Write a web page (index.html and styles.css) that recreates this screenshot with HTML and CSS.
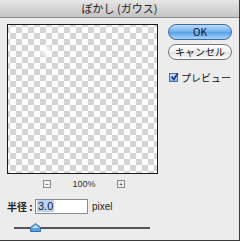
FILE: index.html
```html
<!DOCTYPE html>
<html lang="ja">
<head>
    <meta charset="UTF-8">
    <title>ぼかし (ガウス)</title>
    <link rel="stylesheet" href="styles.css">
</head>
<body>
    <div class="dialog">
        <div class="titlebar">ぼかし (ガウス)</div>
        <div class="content">
            <div class="left">
                <div class="preview"></div>
                <div class="zoombar">
                    <span class="zoombtn">&minus;</span>
                    <span class="zoomval">100%</span>
                    <span class="zoombtn">+</span>
                </div>
                <div class="radius">
                    <span class="label">半径 :</span>
                    <span class="field"><span class="sel">3.0</span></span>
                    <span class="unit">pixel</span>
                </div>
                <div class="slider">
                    <div class="track"></div>
                    <svg class="thumb" width="11" height="9" viewBox="0 0 11 9">
                        <path d="M5.5 0.5 L10.5 4.5 L10.5 8.5 L0.5 8.5 L0.5 4.5 Z" fill="#5b9fe6" stroke="#3a6ea8" stroke-width="1"/>
                        <path d="M2 5 L5.5 2 L9 5 Z" fill="#cfe4fb"/>
                    </svg>
                </div>
            </div>
            <div class="right">
                <div class="btn ok">OK</div>
                <div class="btn cancel">キャンセル</div>
                <label class="check">
                    <span class="box">
                        <svg width="9" height="9" viewBox="0 0 9 9"><path d="M1.5 4.5 L3.8 7.2 L7.8 1.2" fill="none" stroke="#1c3f8a" stroke-width="1.8"/></svg>
                    </span>
                    プレビュー
                </label>
            </div>
        </div>
    </div>
</body>
</html>
```

FILE: styles.css
```css
body {
    margin: 0;
    font-family: "Noto Sans CJK JP", "Liberation Sans", sans-serif;
    background: #ececec;
}
.dialog {
    width: 239px;
    height: 240px;
    background: #ececec;
    border-right: 1px solid #3a3a3a;
    border-bottom: 1px solid #3a3a3a;
    overflow: hidden;
}
.titlebar {
    height: 17px;
    line-height: 17px;
    text-align: center;
    font-size: 11px;
    color: #222;
    background: linear-gradient(#e6e6e6, #c4c4c4);
    border-bottom: 1px solid #8f8f8f;
}
.content {
    display: flex;
    padding: 6px 0 0 7px;
}
.left {
    width: 151px;
}
.preview {
    width: 149px;
    height: 148px;
    border: 1px solid #1a1a1a;
    background-color: #fff;
    background-image:
        radial-gradient(circle at 38px 26px, rgba(255,255,255,0.9) 0, rgba(255,255,255,0) 8px),
        linear-gradient(45deg, #d4d4d4 25%, transparent 25%, transparent 75%, #d4d4d4 75%),
        linear-gradient(45deg, #d4d4d4 25%, transparent 25%, transparent 75%, #d4d4d4 75%);
    background-size: auto, 12px 12px, 12px 12px;
    background-position: 0 0, 2px 2px, 8px 8px;
}
.zoombar {
    display: flex;
    align-items: center;
    height: 12px;
    margin-top: 4px;
    padding-left: 36px;
    font-size: 9px;
    color: #333;
}
.zoombtn {
    width: 6px;
    height: 6px;
    border: 1px solid #888;
    background: #f4f4f4;
    font-size: 7px;
    line-height: 6px;
    text-align: center;
    color: #333;
}
.zoomval {
    width: 66px;
    text-align: center;
    font-family: "Liberation Sans", sans-serif;
}
.radius {
    display: flex;
    align-items: center;
    margin-top: 9px;
    height: 15px;
    font-size: 10px;
    color: #222;
}
.label {
    flex-shrink: 0;
    white-space: nowrap;
    width: 28px;
    font-weight: bold;
}
.field {
    width: 50px;
    height: 13px;
    border: 1px solid #8a8a8a;
    background: #fff;
    font-family: "Liberation Sans", sans-serif;
    font-size: 11px;
    line-height: 13px;
    padding-left: 1px;
}
.sel {
    background: #b7d3f7;
    padding: 0 1px;
}
.unit {
    margin-left: 4px;
    font-family: "Liberation Sans", sans-serif;
    font-size: 10px;
}
.slider {
    position: relative;
    height: 12px;
    margin-top: 8px;
}
.track {
    position: absolute;
    left: 7px;
    top: 5px;
    width: 136px;
    height: 2px;
    background: #555;
}
.thumb {
    position: absolute;
    left: 23px;
    top: 1px;
}
.right {
    display: flex;
    flex-direction: column;
    margin-left: 10px;
    width: 64px;
}
.btn {
    height: 14px;
    line-height: 14px;
    border-radius: 8px;
    text-align: center;
    font-size: 10px;
    color: #111;
}
.ok {
    border: 1px solid #3d69a8;
    background: linear-gradient(#bcdcfb, #70aeee 50%, #5a9fe8 51%, #a8d3fb);
}
.cancel {
    margin-top: 4px;
    border: 1px solid #777;
    background: linear-gradient(#fff, #f0f0f0 50%, #e2e2e2 51%, #fafafa);
}
.check {
    display: flex;
    align-items: center;
    margin-top: 10px;
    margin-left: 1px;
    font-size: 10px;
    color: #111;
}
.box {
    width: 7px;
    height: 7px;
    border: 1px solid #4a6fa8;
    background: linear-gradient(#cfe2fa, #7fb1ec);
    margin-right: 3px;
    position: relative;
}
.box svg {
    position: absolute;
    left: 0;
    top: -2px;
}
```
